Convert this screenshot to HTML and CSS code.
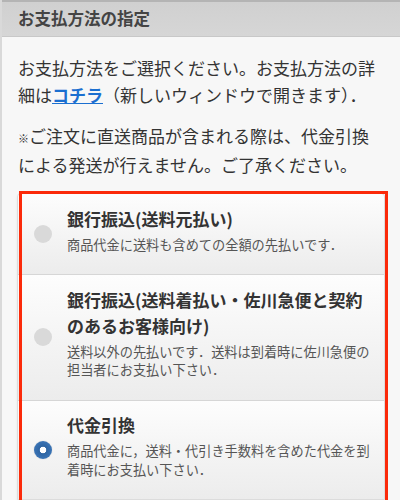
FILE: index.html
```html
<!DOCTYPE html>
<html lang="ja">
<head>
<meta charset="utf-8">
<link rel="stylesheet" href="styles.css">
</head>
<body>
<div class="page">
  <div class="header">お支払方法の指定</div>
  <div class="content">
    <p class="intro">お支払方法をご選択ください。お支払方法の詳細は<a class="link" href="#">コチラ</a>（新しいウィンドウで開きます）．</p>
    <p class="note"><span class="kome">※</span>ご注文に直送商品が含まれる際は、代金引換による発送が行えません。ご了承ください。</p>
    <div class="listwrap">
      <ul class="list">
        <li class="item">
          <span class="radio"></span>
          <div class="texts">
            <div class="title">銀行振込(送料元払い)</div>
            <div class="desc">商品代金に送料も含めての全額の先払いです．</div>
          </div>
        </li>
        <li class="item">
          <span class="radio"></span>
          <div class="texts">
            <div class="title">銀行振込(送料着払い・佐川急便と契約のあるお客様向け)</div>
            <div class="desc">送料以外の先払いです．送料は到着時に佐川急便の担当者にお支払い下さい．</div>
          </div>
        </li>
        <li class="item">
          <span class="radio checked"></span>
          <div class="texts">
            <div class="title">代金引換</div>
            <div class="desc">商品代金に，送料・代引き手数料を含めた代金を到着時にお支払い下さい．</div>
          </div>
        </li>
      </ul>
      <div class="highlight"></div>
    </div>
  </div>
</div>
</body>
</html>
```

FILE: styles.css
```css
* { box-sizing: border-box; }
html, body {
  margin: 0;
  padding: 0;
  background: #f6f6f6;
}
body {
  font-family: "Noto Sans CJK JP", "Noto Sans", sans-serif;
  color: #333;
}
.page {
  width: 400px;
  height: 500px;
  overflow: hidden;
  border-left: 2px solid #d9d9d9;
  background: #f7f7f7;
}
.header {
  height: 37px;
  border-top: 2px solid #b4b4b4;
  background: linear-gradient(#d0d0d0, #d6d6d6);
  border-bottom: 1px solid #c8c8c8;
  padding-left: 16px;
  font-size: 16.5px;
  font-weight: bold;
  color: #444;
  line-height: 33px;
}
.content {
  padding: 0 20px 0 16px;
}
.intro {
  margin: 17px 0 0;
  font-size: 17px;
  line-height: 27px;
  color: #333;
}
.link {
  color: #1b6fd0;
  font-weight: bold;
  text-decoration: underline;
}
.note {
  margin: 15px 0 0;
  font-size: 17px;
  line-height: 26.5px;
  color: #333;
}
.kome {
  font-size: 11px;
}
.listwrap {
  position: relative;
  margin: 15px -5px 0 -1px;
}
.list {
  list-style: none;
  margin: 0;
  padding: 0;
  border: 1px solid #dcdcdc;
  border-radius: 4px 4px 0 0;
  box-shadow: 0 1px 2px rgba(0,0,0,0.08);
  background: #fff;
}
.item {
  display: flex;
  align-items: center;
  padding: 11.5px 8px 20px 16px;
  background: linear-gradient(#fdfdfd, #ececec);
  border-top: 1px solid #d6d6d6;
}
.item:first-child {
  border-top: none;
  border-radius: 4px 4px 0 0;
}
.radio {
  flex: none;
  width: 18px;
  height: 18px;
  border-radius: 50%;
  background: #d9d9d9;
  margin-right: 15px;
  margin-top: 8px;
}
.radio.checked {
  background: radial-gradient(circle, #ffffff 0 3px, #2f65a3 3.6px, #3a74b6 9px);
  box-shadow: 0 0 1px rgba(0,0,0,0.3);
}
.texts {
  flex: 1;
}
.title {
  font-size: 17px;
  font-weight: bold;
  line-height: 26px;
  color: #333;
}
.desc {
  margin-top: 4px;
  font-size: 13.2px;
  line-height: 18.5px;
  color: #555;
}
.highlight {
  position: absolute;
  left: 2px;
  right: -3px;
  top: -2px;
  bottom: -6px;
  border: 3px solid #fb2a0a;
  pointer-events: none;
}
```
